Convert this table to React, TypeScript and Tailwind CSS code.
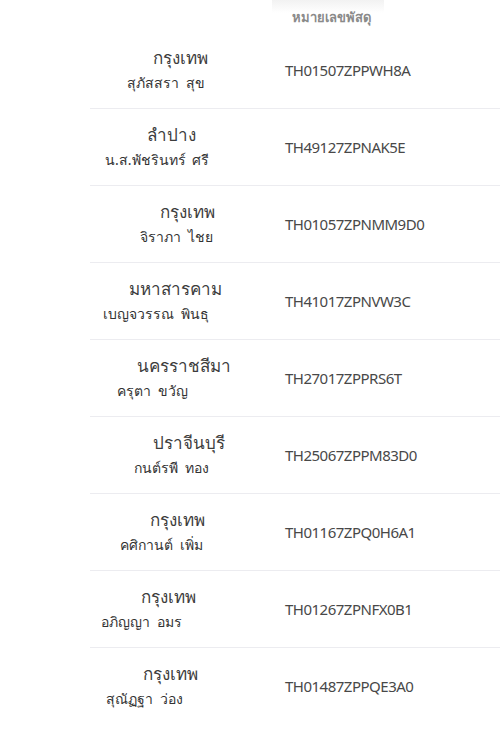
const rows = [
  { province: "กรุงเทพ", name: "สุภัสสรา สุข", code: "TH01507ZPPWH8A", p: "ml-[63px]", n: "ml-[37px]" },
  { province: "ลำปาง", name: "น.ส.พัชรินทร์ ศรี", code: "TH49127ZPNAK5E", p: "ml-[57px]", n: "ml-[15px]" },
  { province: "กรุงเทพ", name: "จิราภา ไชย", code: "TH01057ZPNMM9D0", p: "ml-[70px]", n: "ml-[50px]" },
  { province: "มหาสารคาม", name: "เบญจวรรณ พินธุ", code: "TH41017ZPNVW3C", p: "ml-[39px]", n: "ml-[13px]" },
  { province: "นครราชสีมา", name: "ครุตา ขวัญ", code: "TH27017ZPPRS6T", p: "ml-[47px]", n: "ml-[27px]" },
  { province: "ปราจีนบุรี", name: "กนต์รพี ทอง", code: "TH25067ZPPM83D0", p: "ml-[63px]", n: "ml-[44px]" },
  { province: "กรุงเทพ", name: "คศิกานต์ เพิ่ม", code: "TH01167ZPQ0H6A1", p: "ml-[60px]", n: "ml-[30px]" },
  { province: "กรุงเทพ", name: "อภิญญา อมร", code: "TH01267ZPNFX0B1", p: "ml-[51px]", n: "ml-[11px]" },
  { province: "กรุงเทพ", name: "สุณัฏฐา ว่อง", code: "TH01487ZPPQE3A0", p: "ml-[53px]", n: "ml-[16px]" },
];

export default function App() {
  return (
    <div className="w-[500px] h-[735px] overflow-hidden bg-white font-['Noto_Sans',sans-serif]">
      <div className="flex h-[32px]">
        <div className="w-[272px]" />
        <div className="w-[112px] bg-gradient-to-b from-[#f2f2f2] to-white to-40% flex items-start justify-center pt-[7px]">
          <span className="text-[13px] font-bold text-[#8a8a8a] leading-[20px] ml-[6px]">หมายเลขพัสดุ</span>
        </div>
      </div>

      <div className="ml-[90px]">
        {rows.map((r, i) => (
          <div
            key={r.code}
            className={
              i === rows.length - 1
                ? "flex items-center h-[77px]"
                : "flex items-center h-[77px] border-b border-[#ececf0]"
            }
          >
            <div className="w-[182px] flex flex-col">
              <span className={r.p + " text-[17px] leading-[24px] text-[#3d3d3d]"}>{r.province}</span>
              <span className={r.n + " text-[14px] leading-[24px] mt-[1px] text-[#333] [word-spacing:3px]"}>{r.name}</span>
            </div>
            <div className="pl-[13px] text-[15px] text-[#484848] tracking-[-0.5px]">{r.code}</div>
          </div>
        ))}
      </div>
    </div>
  );
}
